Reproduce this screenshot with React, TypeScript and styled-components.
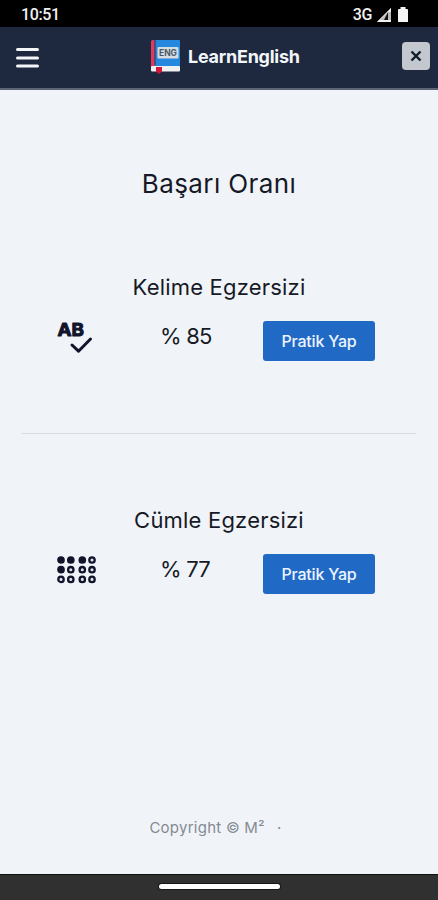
import React from "react";
import styled, { createGlobalStyle } from "styled-components";

const GlobalStyle = createGlobalStyle`
  *, *::before, *::after { box-sizing: border-box; }
  body { margin: 0; background: #f0f4f9; }
  h1, h2, p { margin: 0; font-weight: 400; }
  svg { display: block; overflow: visible; }
`;

const Screen = styled.div`
  display: flex;
  flex-direction: column;
  height: 900px;
  overflow: hidden;
  color: #171a26;
  background: #f0f4f9;
  font-family: Inter, sans-serif;
`;

const StatusBar = styled.div`
  display: flex;
  flex: none;
  align-items: center;
  justify-content: space-between;
  height: 27px;
  padding: 2px 30px 0 21px;
  background: #000;
  color: #f1f1f1;
  font: 500 16px/20px Roboto, sans-serif;
  letter-spacing: -0.4px;
`;

const Signals = styled.div`
  display: flex;
  align-items: center;
  gap: 5px;
`;

const Header = styled.header`
  display: flex;
  flex: none;
  align-items: center;
  justify-content: space-between;
  height: 63px;
  padding: 0 8px 1px 16px;
  background: #1e293f;
  border-bottom: 2px solid #5d6675;
`;

const IconButton = styled.button`
  display: flex;
  width: 29px;
  padding: 0;
  border: 0;
  background: none;
`;

const MenuButton = styled(IconButton)`
  margin-top: 2px;
`;

const CloseButton = styled(IconButton)`
  align-items: center;
  justify-content: center;
  height: 28px;
  width: 28px;
  border-radius: 4px;
  background: #c3c7ce;
  margin-top: -2px;
`;

const Brand = styled.div`
  display: flex;
  align-items: center;
  gap: 7px;
  margin-left: 4px;
  color: #f3f5f8;
  font-size: 18px;
  font-weight: 700;
  line-height: 24px;
`;

const BrandName = styled.span`
  width: 112px;
  white-space: nowrap;
  letter-spacing: -0.25px;
`;

const Main = styled.main`
  display: flex;
  flex: 1;
  flex-direction: column;
  padding: 76px 22px 0;
`;

const PageTitle = styled.h1`
  height: 35px;
  font-size: 26px;
  line-height: 36px;
  letter-spacing: 0.4px;
  text-align: center;
`;

const Exercise = styled.section`
  margin-top: 70px;
`;

const ExerciseTitle = styled.h2`
  font-size: 22px;
  line-height: 32px;
  letter-spacing: 0.2px;
  text-align: center;
`;

const ExerciseRow = styled.div`
  display: grid;
  grid-template-columns: 103px 103px 112px;
  height: 40px;
  margin: 18px 0 0 35px;
`;

const Score = styled.p`
  font-size: 22px;
  line-height: 31px;
  letter-spacing: -0.8px;
`;

const PracticeButton = styled.button`
  height: 40px;
  padding: 0 0 1px;
  border: 0;
  border-radius: 3px;
  background: #206ac5;
  color: #edf4ff;
  font: 500 16px/24px Inter, sans-serif;
  letter-spacing: -0.2px;
`;

const Divider = styled.hr`
  width: 100%;
  height: 1px;
  margin: 72px 0 0;
  border: 0;
  background: #d5dae0;
`;

const Footer = styled.footer`
  display: flex;
  justify-content: center;
  gap: 12px;
  margin: auto 0 34px;
  padding-right: 7px;
  color: #858a92;
  font-size: 15px;
  line-height: 24px;
  letter-spacing: 0.25px;
`;

const NavigationBar = styled.div`
  display: flex;
  flex: none;
  justify-content: center;
  height: 26px;
  padding-top: 9px;
  border-top: 1px solid #101010;
  background: #303030;
`;

const HomeIndicator = styled.div`
  width: 121px;
  height: 5px;
  border-radius: 3px;
  background: #fff;
  box-shadow: 0 0 0 1px #161616;
`;

const StatusIcons = () => (
  <svg width="31" height="18" viewBox="0 0 31 18">
    <path d="M0 16 14 2v14Z" fill="#bbb" />
    <path d="M7 14h4V6Z" fill="#111" />
    <path d="M0 16 14 2v4l-3 0-8 8h11v2Z" fill="#f1f1f1" />
    <path d="M21 4q0-1 1-1h1.5V1h5v2H30q1 0 1 1v12H21Z" fill="#f5f5f5" />
  </svg>
);

const MenuIcon = () => (
  <svg width="25" height="24" viewBox="0 0 25 24" stroke="#f4f5f7" strokeWidth="3" strokeLinecap="round">
    <path d="M1.5 3.5h20M1.5 12h20M1.5 20h20" />
  </svg>
);

const BookIcon = () => (
  <svg width="30" height="36" viewBox="0 0 30 36">
    <path d="M2 1h26q1 0 1 1v30H2q-2 0-2-3V4q0-3 2-3Z" fill="#2488df" />
    <path d="M4 1v26H2q-2 0-2 2V4q0-3 2-3Z" fill="#df3a5c" />
    <path d="M4 1v25" stroke="#173860" />
    <rect y="27" width="29" height="5.5" rx="1" fill="#f0eff1" />
    <rect x="6.5" y="8" width="21" height="11.5" rx="1" fill="#d5dce2" />
    <text x="8" y="17" textLength="18" lengthAdjust="spacingAndGlyphs" fontFamily="Inter, sans-serif" fontSize="9" fontWeight="700" fill="#4a5968">ENG</text>
    <path d="M5 28h6v4.5L8 35l-3-2.5Z" fill="#cf183a" />
  </svg>
);

const CloseIcon = () => (
  <svg width="12" height="12" viewBox="0 0 12 12" stroke="#11192a" strokeWidth="2.4">
    <path d="m1.5 1.5 9 9m0-9-9 9" />
  </svg>
);

const SpellcheckIcon = () => (
  <svg width="36" height="34" viewBox="0 0 36 34" strokeLinejoin="round">
    <text x="0.5" y="15" textLength="26.5" lengthAdjust="spacingAndGlyphs" fontFamily="Inter, sans-serif" fontSize="18" fontWeight="700" fill="#11142b" stroke="#11142b" strokeWidth="1">AB</text>
    <path d="m15 24 6.5 6.2L33.5 18" fill="none" stroke="#11142b" strokeWidth="3" strokeLinecap="round" />
  </svg>
);

const dotColumns = [4, 13.8, 25.3, 35];
const dotRows = [6, 15.7, 25.4];
const filledDots = ["0-0", "0-1", "0-2", "1-0"];

const BrailleIcon = () => (
  <svg width="40" height="32" viewBox="0 0 40 32" stroke="#11142b" strokeWidth="2.3">
    {dotRows.map((y, row) =>
      dotColumns.map((x, col) => (
        <circle
          key={`${row}-${col}`}
          cx={x}
          cy={y}
          r="2.7"
          fill={filledDots.includes(`${row}-${col}`) ? "#11142b" : "#e0e3e9"}
        />
      )),
    )}
  </svg>
);

interface ExercisePanelProps {
  title: string;
  score: number;
  icon: React.ReactNode;
}

const ExercisePanel = ({ title, score, icon }: ExercisePanelProps) => (
  <Exercise>
    <ExerciseTitle>{title}</ExerciseTitle>
    <ExerciseRow>
      {icon}
      <Score>% {score}</Score>
      <PracticeButton>Pratik Yap</PracticeButton>
    </ExerciseRow>
  </Exercise>
);

export default function App() {
  return (
    <Screen>
      <GlobalStyle />
      <StatusBar>
        <span>10:51</span>
        <Signals>
          <span>3G</span>
          <StatusIcons />
        </Signals>
      </StatusBar>
      <Header>
        <MenuButton aria-label="Menü"><MenuIcon /></MenuButton>
        <Brand><BookIcon /><BrandName>LearnEnglish</BrandName></Brand>
        <CloseButton aria-label="Kapat"><CloseIcon /></CloseButton>
      </Header>
      <Main>
        <PageTitle>Başarı Oranı</PageTitle>
        <ExercisePanel title="Kelime Egzersizi" score={85} icon={<SpellcheckIcon />} />
        <Divider />
        <ExercisePanel title="Cümle Egzersizi" score={77} icon={<BrailleIcon />} />
        <Footer><span>Copyright © M²</span><span>·</span></Footer>
      </Main>
      <NavigationBar><HomeIndicator /></NavigationBar>
    </Screen>
  );
}
